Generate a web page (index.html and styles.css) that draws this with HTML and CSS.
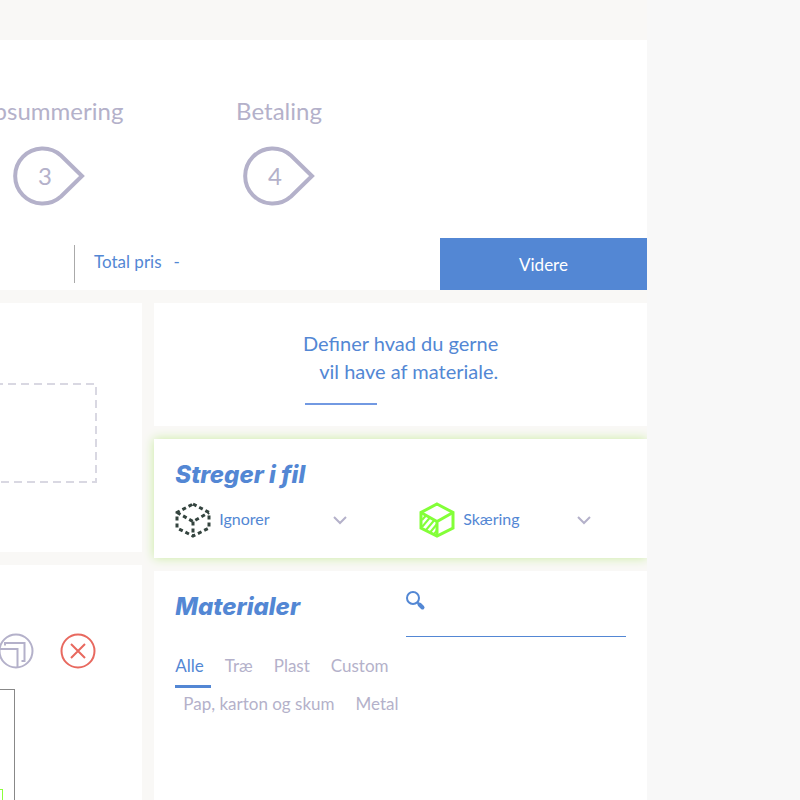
FILE: index.html
```html
<!DOCTYPE html>
<html lang="da">
<head>
  <meta charset="UTF-8">
  <meta name="viewport" content="width=device-width, initial-scale=1.0">
  <title>Materialer</title>
  <link rel="stylesheet" href="styles.css">
</head>
<body>
  <div class="page">
    <!-- Steps and total -->
    <header class="header">
      <ol class="steps">
        <li class="step">
          <span class="step-name">Opsummering</span>
          <span class="step-marker">
            <svg class="step-shape" viewBox="0 0 72 60" aria-hidden="true"><path d="M48 9.500A27.500 27.500 0 1 0 48 50.500L69 30Z"/></svg>
            <span class="step-number">3</span>
          </span>
        </li>
        <li class="step">
          <span class="step-name">Betaling</span>
          <span class="step-marker">
            <svg class="step-shape" viewBox="0 0 72 60" aria-hidden="true"><path d="M48 9.500A27.500 27.500 0 1 0 48 50.500L69 30Z"/></svg>
            <span class="step-number">4</span>
          </span>
        </li>
      </ol>
      <div class="summary">
        <p class="total"><span>Total pris</span><span>-</span></p>
        <button class="next-button" type="button">Videre</button>
      </div>
    </header>

    <main class="columns">
      <!-- Files -->
      <div class="column">
        <section class="card upload">
          <svg class="drop-zone" aria-hidden="true"><path d="M-5 1H96V99H-5"/></svg>
        </section>
        <section class="card file">
          <div class="file-actions">
            <button class="icon-button" type="button" aria-label="Skaler">
              <svg viewBox="0 0 36 36" class="icon-scale"><circle cx="18" cy="18" r="16.500"/><path d="M2 16H19.500V34M7 12.500V10H26.500V28H23.500"/></svg>
            </button>
            <button class="icon-button" type="button" aria-label="Fjern">
              <svg viewBox="0 0 36 36" class="icon-remove"><circle cx="18" cy="18" r="16.500"/><path d="M11 11L25 25M25 11L11 25"/></svg>
            </button>
          </div>
          <div class="preview"><div class="preview-shape"></div></div>
        </section>
      </div>

      <!-- Material choice -->
      <div class="column">
        <section class="card intro">
          <p class="intro-text">Definer hvad du gerne<br>vil have af materiale.</p>
        </section>

        <section class="card lines">
          <h2 class="title">Streger i fil</h2>
          <div class="line-fields">
            <div class="line-field">
              <svg class="cube cube-dashed" viewBox="0 0 36 36" aria-hidden="true"><path d="M18 2L34 10.500V26L18 34L2 26V10.500Z"/><path d="M2 10.500L18 19.500L34 10.500M18 19.500V34"/></svg>
              <select class="line-select" aria-label="Første streg"><option>Ignorer</option></select>
              <svg class="chevron" viewBox="0 0 14 10" aria-hidden="true"><path d="M1 2L7 8L13 2"/></svg>
            </div>
            <div class="line-field">
              <svg class="cube cube-solid" viewBox="0 0 36 36" aria-hidden="true"><path d="M18 2L34 10.500V26L18 34L2 26V10.500Z"/><path d="M2 10.500L18 19.500L34 10.500M18 19.500V34"/><path class="hatch" d="M3 18L7 13.500M3 25L11 15.500M7 28L15 18.500M11 30.500L18 22M15 32L18 28"/></svg>
              <select class="line-select" aria-label="Anden streg"><option>Skæring</option></select>
              <svg class="chevron" viewBox="0 0 14 10" aria-hidden="true"><path d="M1 2L7 8L13 2"/></svg>
            </div>
          </div>
        </section>

        <section class="card materials">
          <div class="materials-top">
            <h2 class="title">Materialer</h2>
            <label class="search">
              <svg class="search-icon" viewBox="0 0 20 20" aria-hidden="true"><circle cx="7" cy="7" r="6"/><path d="M11.500 11.500L13 13"/><path class="handle" d="M13.500 13.500L16.500 16.500"/></svg>
              <input class="search-input" type="text" aria-label="Søg materiale">
            </label>
          </div>
          <nav class="tabs">
            <div class="tab-row">
              <button class="tab active" type="button">Alle</button>
              <button class="tab" type="button">Træ</button>
              <button class="tab" type="button">Plast</button>
              <button class="tab" type="button">Custom</button>
            </div>
            <div class="tab-row indented">
              <button class="tab" type="button">Pap, karton og skum</button>
              <button class="tab" type="button">Metal</button>
            </div>
          </nav>
        </section>
      </div>
    </main>
  </div>
</body>
</html>
```
FILE: styles.css
```css
* {
  margin: 0;
  padding: 0;
  box-sizing: border-box;
}

body {
  font-family: "Lato", sans-serif;
  font-size: 17px;
  color: #5387d4;
  background: #f8f8f8;
  overflow: hidden;
}

button,
input,
select {
  font: inherit;
  color: inherit;
  background: none;
  border: none;
  outline: none;
}

button {
  cursor: pointer;
}

svg {
  fill: none;
  display: block;
}

.page {
  display: flex;
  flex-direction: column;
  gap: 13px;
  min-height: 100vh;
  margin-right: 153px;
  padding-top: 40px;
  background: #f9f8f6;
}

/* Header */
.header {
  background: #fff;
  overflow: hidden;
}

.steps {
  display: flex;
  justify-content: flex-end;
  list-style: none;
  padding: 56px 253px 0 0;
  height: 198px;
  color: #b4b1ca;
}

.step {
  flex: 0 0 230px;
  display: flex;
  flex-direction: column;
  align-items: center;
  gap: 20px;
}

.step-name {
  font-size: 24px;
  line-height: 30px;
}

.step-marker {
  display: grid;
  width: 72px;
  height: 60px;
}

.step-shape,
.step-number {
  grid-area: 1 / 1;
}

.step-shape {
  stroke: #b4b1ca;
  stroke-width: 4;
}

.step-number {
  width: 64px;
  font-size: 24px;
  line-height: 60px;
  text-align: center;
}

.summary {
  display: flex;
  justify-content: space-between;
  height: 52px;
}

.total {
  display: flex;
  gap: 12px;
  height: 38px;
  margin: 7px 0 0 74px;
  padding-left: 19px;
  border-left: 1px solid #aaa;
  line-height: 34px;
}

.next-button {
  width: 32%;
  background: #5387d4;
  color: #fff;
}

/* Columns */
.columns {
  flex: 1;
  display: grid;
  grid-template-columns: 22% 1fr;
  gap: 12px;
}

.column {
  display: flex;
  flex-direction: column;
  gap: 13px;
  min-width: 0;
}

.card {
  background: #fff;
}

/* Files */
.upload {
  padding: 80px 45px 68px 0;
}

.drop-zone {
  width: 100%;
  height: 101px;
  stroke: #d9d8e2;
  stroke-width: 2;
  stroke-dasharray: 8 5;
}

.file {
  flex: 1;
  display: flex;
  flex-direction: column;
  padding-top: 68px;
  overflow: hidden;
}

.file-actions {
  display: flex;
  justify-content: flex-end;
  gap: 26px;
  padding-right: 46px;
}

.icon-button {
  flex: none;
  width: 36px;
  height: 36px;
}

.icon-scale {
  stroke: #b4b1ca;
  stroke-width: 2;
}

.icon-remove {
  stroke: #e8695f;
  stroke-width: 2;
}

.preview {
  flex: 1;
  width: 15px;
  margin-top: 20px;
  padding-top: 99px;
  border: 1px solid #888;
  border-width: 1px 1px 0 0;
}

.preview-shape {
  width: 3px;
  height: 12px;
  border: 1px solid #8cff3c;
  border-width: 1px 1px 0 0;
}

/* Intro */
.intro {
  display: flex;
  justify-content: center;
  padding: 26px 0 21px;
}

.intro-text {
  font-size: 20px;
  line-height: 28px;
  text-align: right;
}

.intro-text::after {
  content: "";
  display: block;
  width: 72px;
  height: 2px;
  margin: 18px 0 0 2px;
  background: #7299e2;
}

.title {
  font-family: "Inter", sans-serif;
  font-size: 24px;
  font-weight: 800;
  font-style: italic;
  line-height: 32px;
}

/* Lines in file */
.lines {
  padding: 20px 56px 20px 21px;
  box-shadow: 0 0 10px #c9eca0;
  clip-path: inset(-14px 0 -14px -14px);
}

.line-fields {
  display: grid;
  grid-template-columns: 1fr 1fr;
  gap: 72px;
  margin-top: 11px;
}

.line-field {
  display: flex;
  align-items: center;
  gap: 8px;
}

.cube {
  flex: none;
  width: 36px;
  height: 36px;
}

.cube-dashed {
  stroke: #34443f;
  stroke-width: 3;
  stroke-dasharray: 4 3;
}

.cube-solid {
  stroke: #83ff38;
  stroke-width: 3;
}

.hatch {
  stroke-width: 2;
}

.line-select {
  flex: 1;
  min-width: 0;
  padding-bottom: 3px;
  font-size: 16px;
  appearance: none;
}

.chevron {
  width: 14px;
  height: 10px;
  stroke: #b4b1ca;
  stroke-width: 2;
}

/* Materials */
.materials {
  flex: 1;
  padding: 20px 21px;
}

.materials-top {
  display: flex;
  justify-content: space-between;
}

.search {
  display: flex;
  align-items: flex-start;
  width: 220px;
  height: 46px;
  border-bottom: 1px solid #5387d4;
}

.search-icon {
  flex: none;
  width: 20px;
  height: 20px;
  stroke: #5387d4;
  stroke-width: 2;
}

.handle {
  stroke-width: 4;
  stroke-linecap: round;
}

.search-input {
  flex: 1;
  min-width: 0;
  padding-left: 8px;
}

.tabs {
  margin-top: 16px;
}

.tab-row {
  display: flex;
  gap: 21px;
}

.indented {
  padding-left: 8px;
}

.tab {
  height: 38px;
  padding-bottom: 13px;
  line-height: 24px;
  color: #b4b1ca;
}

.tab.active {
  color: #5387d4;
  position: relative;
}

.tab.active::after {
  content: "";
  position: absolute;
  left: 0;
  bottom: 3px;
  width: 36px;
  height: 3px;
  background: #5387d4;
}
```
